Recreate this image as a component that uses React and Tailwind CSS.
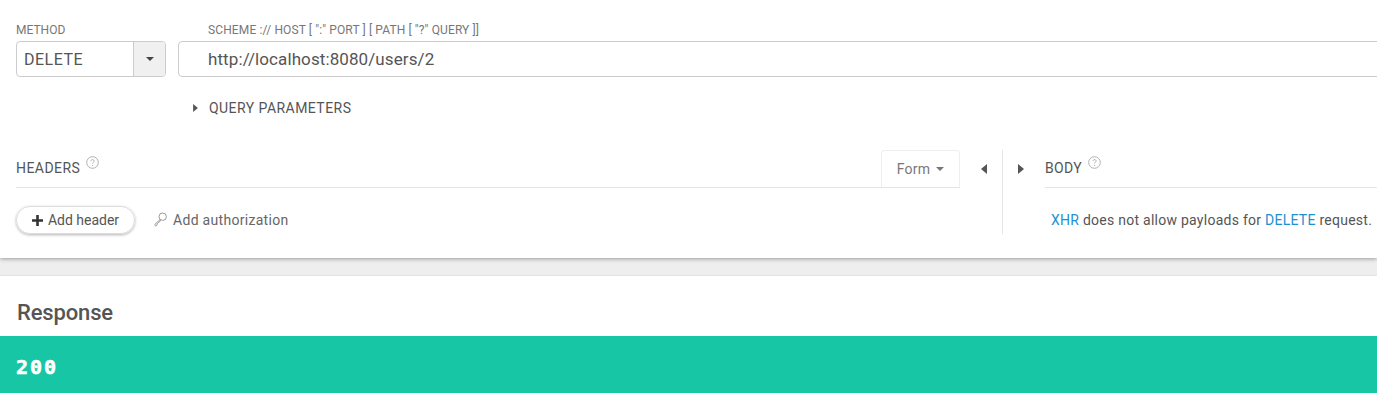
const Help = ({ className = "" }) => (
  <svg width="13" height="13" viewBox="0 0 13 13" fill="none" className={className}>
    <circle cx="6.5" cy="6.5" r="5.8" stroke="#a8a8a8" strokeWidth="0.9" />
    <path d="M4.9 5.1c.1-1 .8-1.5 1.7-1.5s1.6.6 1.6 1.4c0 1.2-1.6 1.2-1.6 2.5" stroke="#a8a8a8" strokeWidth="0.9" />
    <circle cx="6.6" cy="9.3" r="0.6" fill="#a8a8a8" />
  </svg>
);

const Tri = ({ dir, className = "" }) => (
  <svg width="6" height="10" viewBox="0 0 6 10" className={className}>
    <path d={dir === "left" ? "M6 0v10L0 5z" : "M0 0v10l6-5z"} fill="#555" />
  </svg>
);

const Caret = ({ className = "", color = "#444" }) => (
  <svg width="8" height="4" viewBox="0 0 8 4" className={className}>
    <path d="M0 0h8L4 4z" fill={color} />
  </svg>
);

const Key = () => (
  <svg width="13" height="15" viewBox="0 0 13 15" fill="none" stroke="#8f8f8f" strokeWidth="0.9" className="mt-[-2px]">
    <circle cx="8.7" cy="4.7" r="3.7" />
    <path d="M6.2 7.5 1 12.2c-.3.5-.2 1 .2 1.4l.6.6M7 8.3 3.4 11.6l-.6 1.6-1 1" />
  </svg>
);

const Plus = () => (
  <svg width="11" height="11" viewBox="0 0 11 11">
    <path d="M4.2 0h2.6v4.2H11v2.6H6.8V11H4.2V6.8H0V4.2h4.2z" fill="#333" />
  </svg>
);

export default function App() {
  return (
    <div className="h-[408px] w-[1377px] overflow-hidden bg-white font-['Roboto',sans-serif] text-[#555]">
      <div className="relative h-[258px] bg-white px-4 pt-[22px] shadow-[0_1px_4px_rgba(0,0,0,0.35)]">
        <div className="flex gap-3">
          <div className="w-[150px] shrink-0">
            <div className="h-[19px] text-xs leading-[16px] text-[#777]">METHOD</div>
            <div className="flex h-9 overflow-hidden rounded border border-[#ccc]">
              <div className="flex flex-1 items-center pl-[7px] pt-[2px] text-base tracking-[0.5px] text-[#555]">DELETE</div>
              <div className="flex w-8 items-center justify-center border-l border-[#ccc] bg-[#f0f0f0]">
                <Caret />
              </div>
            </div>
          </div>
          <div className="w-[1300px] shrink-0">
            <div className="h-[19px] pl-[30px] text-xs leading-[16px] tracking-[0.12px] text-[#777]">
              {'SCHEME :// HOST [ ":" PORT ] [ PATH [ "?" QUERY ]]'}
            </div>
            <div className="flex h-9 items-center rounded border border-[#ccc] pl-[29px] pt-[2px] text-[17px] tracking-[0.1px] text-[#555]">
              http://localhost:8080/users/2
            </div>
          </div>
        </div>

        <div className="mt-[21px] flex h-[20px] items-center pl-[177px]">
          <Tri dir="right" className="h-[8px] w-[5px]" />
          <span className="ml-[11px] text-sm tracking-[0.45px] text-[#555]">QUERY PARAMETERS</span>
        </div>

        <div className="mt-[32px] flex">
          <div className="w-[944px] shrink-0">
            <div className="flex h-[38px] border-b border-[#e5e5e5]">
              <div className="flex flex-1 items-start pt-[8px] text-sm tracking-[0.45px]">
                <span>HEADERS</span>
                <Help className="ml-[6px] mt-[-2px]" />
              </div>
              <div className="flex w-[79px] items-center justify-center gap-[6px] rounded-t border border-b-0 border-[#eee] text-sm tracking-[0.2px] text-[#777]">
                Form <Caret color="#777" />
              </div>
            </div>
            <div className="mt-[18px] flex items-center">
              <div className="flex h-7 w-[119px] items-center justify-center gap-[5px] rounded-full border border-[#ddd] text-sm text-[#555] shadow-[0_1px_3px_rgba(0,0,0,0.3)]">
                <Plus />
                <span>Add header</span>
              </div>
              <div className="ml-[19px] flex items-center gap-[6px] text-sm tracking-[0.3px] text-[#666]">
                <Key />
                Add authorization
              </div>
            </div>
          </div>
          <div className="flex h-[38px] w-[42px] shrink-0 items-center pb-[1px] pl-[21px]">
            <Tri dir="left" />
          </div>
          <div className="h-[84px] w-px shrink-0 bg-[#e5e5e5]" />
          <div className="flex h-[38px] w-[42px] shrink-0 items-center pl-[15px] pb-[1px]">
            <Tri dir="right" />
          </div>
          <div className="w-[332px] shrink-0">
            <div className="flex h-[38px] items-start border-b border-[#e5e5e5] pt-[8px] text-sm tracking-[0.3px]">
              <span>BODY</span>
              <Help className="ml-[6px] mt-[-2px]" />
            </div>
            <div className="mt-[22px] whitespace-nowrap pl-[6px] text-sm tracking-[0.26px] text-[#555]">
              <span className="text-[#1e8fd0]">XHR</span> does not allow payloads for{" "}
              <span className="text-[#1e8fd0]">DELETE</span> request.
            </div>
          </div>
        </div>
      </div>

      <div className="h-[18px] border-b border-[#e3e3e3] bg-[#eee]" />

      <div className="flex h-[60px] items-center px-[17px] pt-[13px] text-[22px] font-medium tracking-[-0.15px] text-[#555]">Response</div>
      <div className="flex h-[57px] items-center bg-[#17c6a5] pl-4 pt-[5px] font-['DejaVu_Sans_Mono',monospace] text-[20px] font-bold tracking-[2px] text-white [-webkit-text-stroke:0.6px_white]">
        200
      </div>
    </div>
  );
}
